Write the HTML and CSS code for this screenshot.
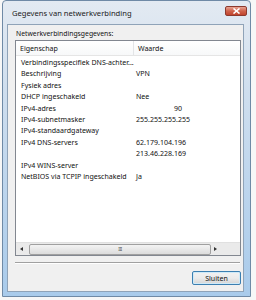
FILE: index.html
```html
<!DOCTYPE html>
<html>
 <head>
  <title>Gegevens van netwerkverbinding</title>
  <link rel="stylesheet" href="styles.css">
 </head>
 <body>
  <div class="window">
   <div class="titlebar">
    <span class="title">Gegevens van netwerkverbinding</span>
    <span class="close">
     <svg width="9" height="6" viewBox="0 0 9 6"><path d="M1.5 0.5 L7.5 5.5 M7.5 0.5 L1.5 5.5" stroke="#fff" stroke-width="1.6"/></svg>
    </span>
   </div>
   <div class="client">
    <div class="caption">Netwerkverbindingsgegevens:</div>
    <div class="listbox">
     <div class="header">
      <div class="hcell first">Eigenschap</div>
      <div class="hcell">Waarde</div>
     </div>
     <div class="rows">
      <div class="row"><span>Verbindingsspecifiek DNS-achter...</span><span></span></div>
      <div class="row"><span>Beschrijving</span><span>VPN</span></div>
      <div class="row"><span>Fysiek adres</span><span></span></div>
      <div class="row"><span>DHCP ingeschakeld</span><span>Nee</span></div>
      <div class="row"><span>IPv4-adres</span><span class="shifted">90</span></div>
      <div class="row"><span>IPv4-subnetmasker</span><span>255.255.255.255</span></div>
      <div class="row"><span>IPv4-standaardgateway</span><span></span></div>
      <div class="row"><span>IPv4 DNS-servers</span><span>62.179.104.196</span></div>
      <div class="row"><span></span><span>213.46.228.169</span></div>
      <div class="row"><span>IPv4 WINS-server</span><span></span></div>
      <div class="row"><span>NetBIOS via TCPIP ingeschakeld</span><span>Ja</span></div>
     </div>
     <div class="hscroll">
      <span class="arrow left"></span>
      <div class="thumb"><span class="grip">III</span></div>
      <span class="arrow right"></span>
     </div>
    </div>
    <div class="sep"></div>
    <div class="buttons">
     <button class="btn">Sluiten</button>
    </div>
   </div>
  </div>
 </body>
</html>
```

FILE: styles.css
```css
body { margin: 0; background: #f7f7f7; font-family: "Noto Sans", "Open Sans", sans-serif; font-size: 7.05px; color: #111; }

.window
{
 margin-left: 2px;
 width: 249px;
 height: 297px;
 box-sizing: border-box;
 border: 1px solid #6f8aa6;
 border-radius: 4px 4px 0 0;
 background: linear-gradient(#e3eaf2, #cfdeee 30%, #a9cbeb);
 padding: 0 6px 4px 4px;
 display: flex;
 flex-direction: column;
}

.titlebar { height: 23px; display: flex; align-items: center; justify-content: space-between; }
.title { font-size: 7.6px; color: #1a1a1a; padding-left: 5px; }
.close
{
 width: 20px;
 height: 8px;
 margin-right: -3px;
 margin-top: -4px;
 border: 1px solid #8c3a2e;
 border-radius: 2px;
 background: linear-gradient(#e8a493, #d0634c 50%, #c0442e);
 display: flex;
 align-items: center;
 justify-content: center;
}

.client
{
 flex: 1;
 background: #f0f0f0;
 border: 1px solid #8fa3b8;
 padding: 2px 2px 0 7px;
 display: flex;
 flex-direction: column;
}

.caption { height: 13px; line-height: 13px; padding-left: 1px; font-size: 6.8px; }

.listbox
{
 height: 216px;
 box-sizing: border-box;
 border: 1px solid #828790;
 background: #fff;
 display: flex;
 flex-direction: column;
}

.header { display: flex; height: 14px; border-bottom: 1px solid #e5e5e5; background: linear-gradient(#fff, #f7f8f9); }
.hcell { line-height: 14px; padding-left: 4px; }
.hcell.first { width: 113px; border-right: 1px solid #e3e5e7; }

.rows { flex: 1; padding-top: 1px; }
.row { display: flex; height: 11.4px; line-height: 11.4px; }
.row span:first-child { width: 116px; padding-left: 5px; box-sizing: border-box; white-space: nowrap; }
.row span:last-child { padding-left: 4px; }
.row span.shifted { padding-left: 42px; }

.hscroll { height: 12px; display: flex; align-items: center; background: #eaeaea; border-top: 1px solid #e0e0e0; padding: 0 4px; gap: 3px; }
.arrow { width: 0; height: 0; border-top: 2px solid transparent; border-bottom: 2px solid transparent; }
.arrow.left { border-right: 3px solid #333; }
.arrow.right { border-left: 3px solid #333; }
.thumb
{
 width: 180px;
 height: 9px;
 margin-left: 3px;
 border: 1px solid #a0a0a0;
 border-radius: 2px;
 background: linear-gradient(#f3f3f3, #dcdcdc);
 display: flex;
 align-items: center;
 justify-content: center;
}
.grip { font-size: 5px; color: #555; letter-spacing: -0.5px; }

.sep { margin: 6px 1px 0 0; border-top: 1px solid #a0a0a0; border-bottom: 1px solid #fff; }

.buttons { display: flex; justify-content: flex-end; padding-top: 7px; }
.btn
{
 width: 49px;
 height: 14px;
 padding: 0;
 font-family: inherit;
 font-size: 7.05px;
 color: #111;
 border: 1px solid #3c7fb1;
 border-radius: 2px;
 background: linear-gradient(#f2f2f2, #ebebeb 50%, #d5d5d5);
 box-shadow: inset 0 0 0 1px #cfeaf8;
}
```
